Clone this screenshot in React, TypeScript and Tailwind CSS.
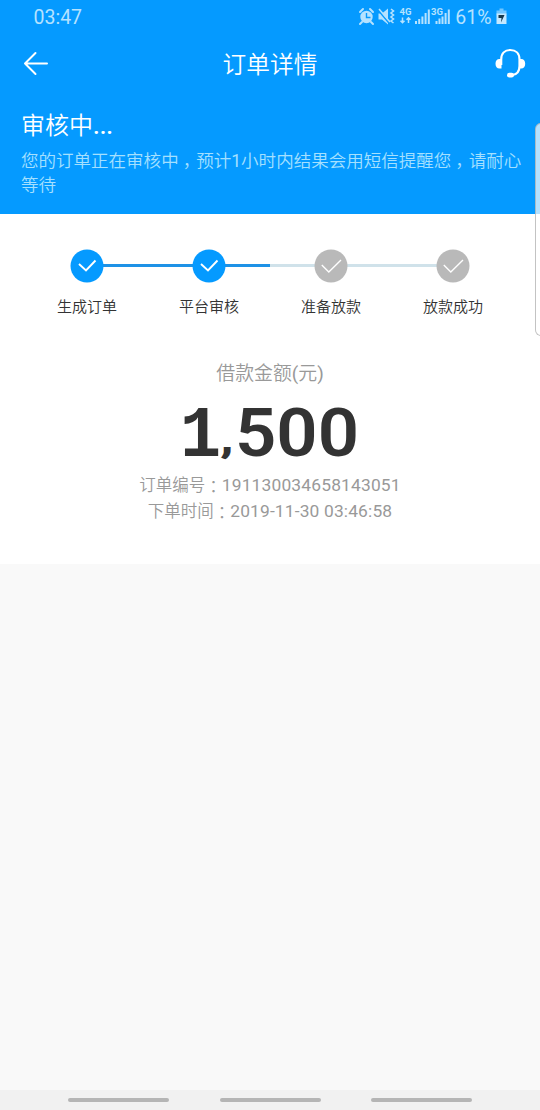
import React from 'react';

function StatusBar() {
  return (
    <div className="flex h-[34px] items-center justify-between pl-[33.500px] pr-[33px] font-['Roboto',sans-serif] text-[20px] font-normal text-[#b5e2ff]">
      <span className="pt-[2px] text-[19.500px]">03:47</span>
      <svg width="150" height="34" viewBox="357 0 150 34" fill="none">
        <circle cx="366.5" cy="17" r="6.2" fill="#b5e2ff" />
        <path d="M360 12l3-3M373 12l-3-3M362 22l-2 2M371 22l2 2" stroke="#b5e2ff" strokeWidth="2" strokeLinecap="round" />
        <path d="M366.5 13v4.5h4" stroke="#059aff" strokeWidth="1.4" />
        <path d="M378.500 13.500h3.500l6-5v16l-6-5h-3.500z" fill="#b5e2ff" />
        <path d="M378 10l11 13" stroke="#059aff" strokeWidth="1.600" />
        <path d="M379 9l11 13" stroke="#b5e2ff" strokeWidth="1.500" />
        <path d="M391 9l2.500 2-2.500 2 2.500 2-2.500 2 2.500 2-2.500 2 2.500 2" stroke="#b5e2ff" strokeWidth="1.600" />
        <text x="399.500" y="15.300" fill="#b5e2ff" className="font-['Roboto',sans-serif] text-[9.500px] font-bold">4G</text>
        <path d="M402.500 17.500v5M400.500 20.800l2 2 2-2M408.500 23v-5M406.500 19.800l2-2 2 2" stroke="#b5e2ff" strokeWidth="1.500" />
        <path d="M416 21v3M419.200 19v5M422.400 16.500v7.500M425.600 13v11M428.800 9.500v14.500" stroke="#b5e2ff" strokeWidth="2" />
        <text x="431" y="15.300" fill="#b5e2ff" className="font-['Roboto',sans-serif] text-[9.500px] font-bold">3G</text>
        <path d="M436.500 21v3M439.500 18.500v5.500M442.500 16.500v7.500M445.600 13v11M448.800 9.500v14.500" stroke="#b5e2ff" strokeWidth="2" />
        <text x="455.300" y="24" fill="#b5e2ff" className="font-['Roboto',sans-serif] text-[19.500px]">61%</text>
        <path d="M499.500 8.500h4v2h3v4h-10v-4h3z" fill="#70c5ff" />
        <path d="M496.500 13.500h10v10.500h-10z" fill="#c5e8ff" />
        <path d="M498.500 15h6l-3.500 7.500.5-4.500h-3z" fill="#17394e" />
      </svg>
    </div>
  );
}

function TitleBar() {
  return (
    <div className="flex h-[60px] items-center pl-[23px] pr-[14px]">
      <svg width="26" height="26" viewBox="0 0 26 26" fill="none" stroke="#fff" strokeWidth="2" strokeLinecap="round" strokeLinejoin="round">
        <path d="M12.500 2L2 12.500l10.500 10.500M2 12.500h22" />
      </svg>
      <h1 className="flex-1 pr-[3px] pt-[3px] text-center text-[23.700px] leading-none">订单详情</h1>
      <svg width="32" height="32" viewBox="0 0 32 32" fill="none">
        <path d="M7.200 17v-5.500C7.200 5.500 10.800 2 16.300 2s9.200 3.500 9.200 9.500V18c0 5.500-3 8.600-7.500 9.200" stroke="#fff" strokeWidth="2.200" />
        <path d="M7.500 11v9.500H5.500c-2.500 0-4-1.800-4-4.800S3 11 5.500 11zM25 11v9.500h2.200c2.500 0 4-1.800 4-4.800S29.700 11 27.200 11z" fill="#fff" />
        <rect x="13" y="24.800" width="7" height="4.800" rx="2.400" fill="#fff" />
      </svg>
    </div>
  );
}

function Comma() {
  return <span className="relative left-[4px]">{'\uff0c'}</span>;
}

function Colon() {
  return <span className="relative top-[2px] font-['Noto_Sans_CJK_TC',sans-serif]" lang="zh-TW">{'\uff1a'}</span>;
}

const steps = [
  { label: '生成订单', done: true },
  { label: '平台审核', done: true },
  { label: '准备放款', done: false },
  { label: '放款成功', done: false },
];

function Steps() {
  return (
    <div className="relative flex justify-center pt-[35px]">
      <div className="absolute left-[87px] top-[50px] flex h-[3px] w-[366px]">
        <div className="w-[183px] bg-[#1e92e6]" />
        <div className="w-[183px] bg-[#d0e2ea]" />
      </div>
      {steps.map((s) => (
        <div key={s.label} className="relative flex w-[122px] flex-col items-center">
          <svg width="34" height="34" viewBox="0 0 34 34" fill="none">
            <circle cx="17" cy="17" r="16.500" fill={s.done ? '#059aff' : '#b9b9b9'} />
            <path d={s.done ? 'M9 15l7 6.500 9.500-10' : 'M7.800 16l7 7L27 11'} stroke="#fff" strokeWidth={s.done ? 1.9 : 1.4} />
          </svg>
          <span className="mt-[13px] text-[15px] leading-[23px] text-[#333]">{s.label}</span>
        </div>
      ))}
    </div>
  );
}

function Amount() {
  return (
    <div className="mt-[7px] flex h-[78px] w-[180px] items-baseline whitespace-nowrap text-[#333]">
      <span className="w-[39px] font-['Liberation_Mono',monospace] text-[72px] font-bold leading-[80px]">
        <span className="inline-block origin-left scale-x-[0.950]">1</span>
      </span>
      <span className="flex w-[141px] items-baseline font-['Roboto',sans-serif] text-[67px] font-semibold leading-[80px]">
        <span className="w-[16px] pl-[1px] text-[38px] leading-none">
          <span className="inline-block origin-left -translate-y-[4px] scale-x-[1.350] font-black">,</span>
        </span>
        <span className="inline-block origin-left scale-x-[1.080]">500</span>
      </span>
    </div>
  );
}

export default function App() {
  return (
    <div lang="zh-CN" className="relative flex h-[1110px] w-[540px] flex-col overflow-hidden bg-[#f9f9f9] font-['Roboto','Noto_Sans_CJK_SC',sans-serif] font-[350]">
      <header className="h-[214px] bg-[#059aff] text-white">
        <StatusBar />
        <TitleBar />
        <div className="pl-[21px] pr-[10px] pt-[17px]">
          <h2 className="text-[24px] leading-[30px]">审核中<span className="font-medium">...</span></h2>
          <p className="mt-[8px] whitespace-nowrap text-[17.530px] leading-[24px] text-[#a5e0ff]">
            您的订单正在审核中<Comma />预计<span className="font-normal">1</span>小时内结果会用短信提醒您<Comma />请耐心<br />等待
          </p>
        </div>
      </header>
      <main className="h-[350px] bg-white">
        <Steps />
        <div className="flex flex-col items-center text-[#999]">
          <p className="mt-[43px] text-[18.900px] leading-[24px]">借款金额<span className="font-normal">(</span>元<span className="font-normal">)</span></p>
          <Amount />
          <p className="mt-px text-[16.500px] leading-[25px]">订单编号<Colon /><span className="text-[17.400px] font-normal tracking-[0.170px]">191130034658143051</span></p>
          <p className="text-[16.500px] leading-[25px]">下单时间<Colon /><span className="text-[17.400px] font-normal tracking-[0.150px]">2019-11-30 03:46:58</span></p>
        </div>
      </main>
      <footer className="mt-auto flex h-5 items-center justify-between bg-[#f1f1f1] px-[68px]">
        <div className="h-[4.500px] w-[101px] rounded-full bg-[#b5b5b5]" />
        <div className="h-[4.500px] w-[101px] rounded-full bg-[#b5b5b5]" />
        <div className="h-[4.500px] w-[101px] rounded-full bg-[#b5b5b5]" />
      </footer>
      <div className="absolute left-[535px] top-[123px] h-[213px] w-[12px] rounded-[7px] border border-[#aaa]/70 bg-white/70" />
    </div>
  );
}
